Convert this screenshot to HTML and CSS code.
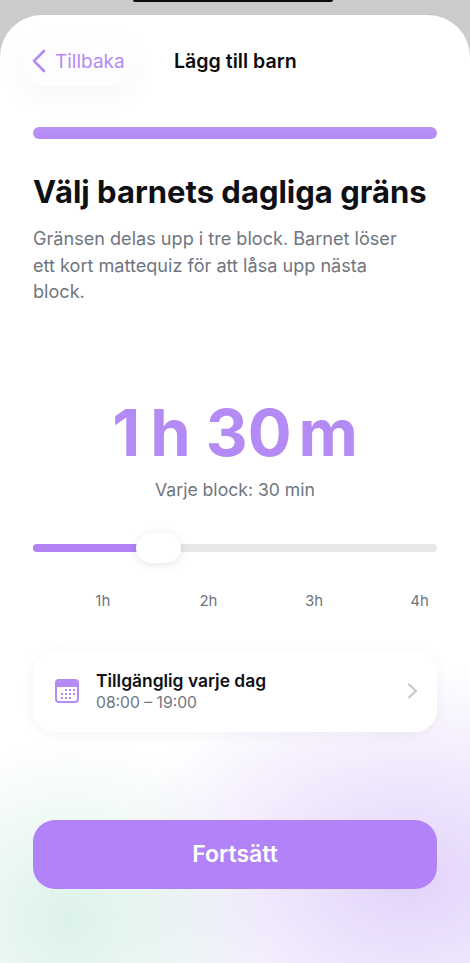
FILE: index.html
```html
<!DOCTYPE html>
<html lang="sv">
<head>
    <meta charset="UTF-8">
    <meta name="viewport" content="width=device-width, initial-scale=1.0">
    <title>Lägg till barn</title>
    <link rel="stylesheet" href="styles.css">
</head>
<body>
    <div class="notch"></div>
    <main class="sheet">
        <header class="top-bar">
            <a class="back-button" href="#">
                <svg width="15" height="24" viewBox="0 0 15 24" fill="none">
                    <path d="M13 2 L3 12 L13 22" stroke="#b48af5" stroke-width="2.6" stroke-linecap="round" stroke-linejoin="round"/>
                </svg>
                <span>Tillbaka</span>
            </a>
            <h1 class="page-title">Lägg till barn</h1>
        </header>

        <div class="progress"></div>

        <h2 class="heading">Välj barnets dagliga gräns</h2>
        <p class="intro">Gränsen delas upp i tre block. Barnet löser ett kort mattequiz för att låsa upp nästa block.</p>

        <div class="time-value">
            <span>1</span><span class="time-hours">h</span>
            <span class="time-number">30</span><span class="time-minutes">m</span>
        </div>
        <div class="time-note">Varje block: 30 min</div>

        <div class="slider">
            <div class="slider-fill"></div>
            <div class="slider-thumb"></div>
        </div>
        <div class="slider-labels">
            <span>1h</span>
            <span>2h</span>
            <span>3h</span>
            <span>4h</span>
        </div>

        <a class="schedule-card" href="#">
            <svg class="calendar-icon" width="24" height="24" viewBox="0 0 24 24">
                <rect x="1" y="1" width="22" height="22" rx="3" fill="#fff" stroke="#b48af5" stroke-width="2"/>
                <path d="M1 8 V4 a3 3 0 0 1 3 -3 H20 a3 3 0 0 1 3 3 V8 Z" fill="#b48af5"/>
                <g fill="#b48af5">
                    <rect x="10" y="10" width="2" height="2"/>
                    <rect x="14" y="10" width="2" height="2"/>
                    <rect x="18" y="10" width="2" height="2"/>
                    <rect x="6" y="14" width="2" height="2"/>
                    <rect x="10" y="14" width="2" height="2"/>
                    <rect x="14" y="14" width="2" height="2"/>
                    <rect x="18" y="14" width="2" height="2"/>
                    <rect x="6" y="18" width="2" height="2"/>
                    <rect x="10" y="18" width="2" height="2"/>
                    <rect x="14" y="18" width="2" height="2"/>
                </g>
            </svg>
            <div class="schedule-text">
                <div class="schedule-title">Tillgänglig varje dag</div>
                <div class="schedule-time">08:00 – 19:00</div>
            </div>
            <svg class="chevron" width="11" height="16" viewBox="0 0 11 16" fill="none">
                <path d="M2 1.5 L9 8 L2 14.5" stroke="#c4c6ca" stroke-width="2" stroke-linecap="round" stroke-linejoin="round"/>
            </svg>
        </a>

        <button class="continue-button" type="button">Fortsätt</button>
    </main>
</body>
</html>
```

FILE: styles.css
```css
* {
    box-sizing: border-box;
}
html, body {
    margin: 0;
    padding: 0;
}
body {
    position: relative;
    width: 470px;
    height: 963px;
    overflow: hidden;
    padding-top: 15px;
    background-color: #cbcbcb;
    font-family: Inter, "Liberation Sans", sans-serif;
}
a {
    text-decoration: none;
    color: inherit;
}
.notch {
    position: absolute;
    top: 0;
    left: 133px;
    width: 200px;
    height: 2px;
    background-color: #0b0b0b;
    border-radius: 0 0 6px 6px;
}
.sheet {
    height: 948px;
    padding: 21px 33px 0;
    border-radius: 42px 42px 0 0;
    background-color: #fff;
    background-image:
        radial-gradient(ellipse 200px 180px at 70px 905px, rgba(205, 236, 224, 0.7), rgba(205, 236, 224, 0) 100%),
        radial-gradient(ellipse 300px 215px at 410px 865px, rgba(221, 203, 250, 0.85), rgba(221, 203, 250, 0) 100%);
    background-repeat: no-repeat;
}
.top-bar {
    display: flex;
    align-items: center;
    height: 50px;
    margin-left: -13px;
}
.back-button {
    display: flex;
    align-items: center;
    gap: 9px;
    width: 116px;
    height: 50px;
    padding-left: 11px;
    border-radius: 25px;
    background-color: #fdfdfe;
    box-shadow: 0 10px 30px rgba(0, 0, 0, 0.04);
    color: #b48af5;
    font-size: 19px;
}
.page-title {
    margin: 0 0 0 38px;
    font-size: 19.6px;
    font-weight: 600;
    color: #0c0c0e;
}
.progress {
    height: 12px;
    margin-top: 41px;
    border-radius: 6px;
    background: linear-gradient(#b893f3, #b48af5);
}
.heading {
    margin: 34px 0 0;
    font-size: 31px;
    line-height: 38px;
    font-weight: 700;
    color: #0f1014;
    white-space: nowrap;
}
.intro {
    max-width: 370px;
    margin: 14px 0 0;
    font-size: 18.1px;
    line-height: 26.5px;
    color: #6f7580;
}
.time-value {
    display: flex;
    justify-content: center;
    margin-top: 88px;
    height: 80px;
    line-height: 80px;
    font-size: 65px;
    font-weight: 700;
    color: #b48af5;
}
.time-hours {
    margin-left: 10px;
}
.time-number {
    margin-left: 15px;
}
.time-minutes {
    margin-left: 7px;
}
.time-note {
    margin-top: 5px;
    text-align: center;
    font-size: 17.6px;
    line-height: 24px;
    color: #6f7580;
}
.slider {
    position: relative;
    height: 8px;
    margin-top: 42px;
    border-radius: 4px;
    background-color: #e7e7e8;
}
.slider-fill {
    width: 110px;
    height: 100%;
    border-radius: 4px 0 0 4px;
    background-color: #b183f3;
}
.slider-thumb {
    position: absolute;
    top: -11px;
    left: 103px;
    width: 45px;
    height: 30px;
    border-radius: 15px;
    background-color: #fff;
    box-shadow: 0 2px 10px rgba(0, 0, 0, 0.1);
}
.slider-labels {
    display: grid;
    grid-template-columns: repeat(4, 105.6px);
    margin-top: 39px;
    padding-left: 17px;
    font-size: 15px;
    line-height: 20px;
    color: #6f7580;
    text-align: center;
}
.schedule-card {
    display: flex;
    align-items: center;
    height: 81px;
    margin-top: 40px;
    padding: 0 19px 0 22px;
    border-radius: 22px;
    background-color: #fff;
    box-shadow: 0 2px 14px rgba(60, 40, 100, 0.05);
}
.calendar-icon {
    flex: none;
}
.schedule-text {
    flex: 1;
    margin-left: 17px;
}
.schedule-title {
    font-size: 17.4px;
    line-height: 24px;
    font-weight: 600;
    color: #0f1014;
}
.schedule-time {
    font-size: 15.7px;
    line-height: 20px;
    color: #6f7580;
}
.continue-button {
    display: block;
    width: 100%;
    height: 69px;
    margin-top: 88px;
    border: none;
    border-radius: 22px;
    background-color: #b283f8;
    color: #fff;
    font-family: inherit;
    font-size: 23px;
    font-weight: 600;
}
```
